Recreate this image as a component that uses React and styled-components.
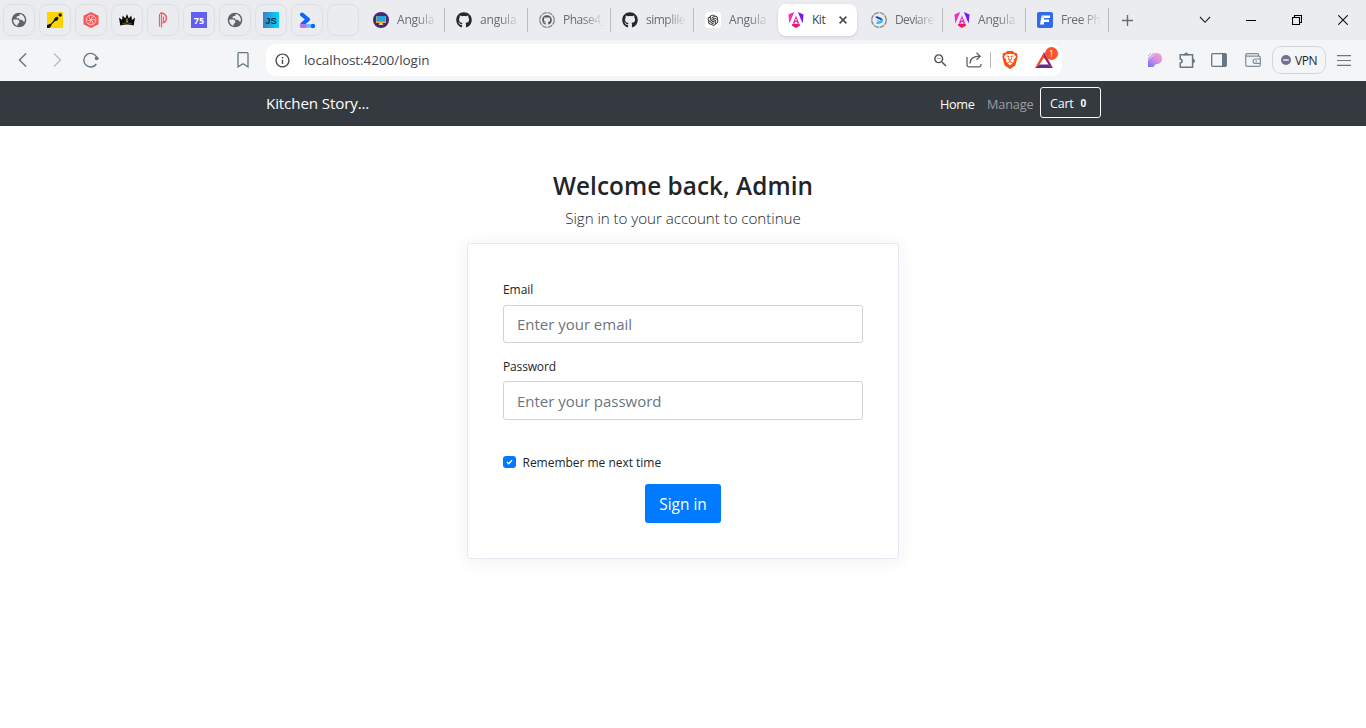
import React from "react";
import styled, { createGlobalStyle, css } from "styled-components";
import { MdInfoOutline, MdZoomOut } from "react-icons/md";
import { FaGithub } from "react-icons/fa";
import { AiOutlineOpenAI } from "react-icons/ai";
import { SiBrave } from "react-icons/si";

const Global = createGlobalStyle`
  *, *::before, *::after { box-sizing: border-box; }
  body { margin: 0; background: #fff; font-family: "Open Sans", "Noto Sans", sans-serif; }
  svg { display: block; flex: none; }
`;

const Screen = styled.div`
  width: 1366px;
  height: 728px;
  overflow: hidden;
  display: flex;
  flex-direction: column;
`;

const TabStrip = styled.div`
  height: 40px;
  flex: none;
  display: flex;
  align-items: center;
  background: #ebecf0;
  padding-left: 3px;
`;

const PinnedTabs = styled.div`
  display: flex;
  gap: 4px;
  margin-right: 3px;
`;

const PinnedTab = styled.div`
  width: 32px;
  height: 32px;
  border: 1px solid #dedfe3;
  border-radius: 8px;
  display: flex;
  align-items: center;
  justify-content: center;
`;

const TabSlot = styled.div`
  width: 83px;
  height: 24px;
  flex: none;
  display: flex;
  align-items: center;
  padding-left: 11px;
  gap: 8px;
  border-right: 1px solid ${(p) => (p.$divider ? "#bdbec1" : "transparent")};
`;

const ActiveTab = styled.div`
  width: 79px;
  height: 32px;
  flex: none;
  margin: 0 3px 0 1px;
  padding: 0 8px 0 10px;
  display: flex;
  align-items: center;
  gap: 8px;
  background: #fff;
  border-radius: 8px;
  box-shadow: 0 1px 3px rgba(0, 0, 0, 0.12);
`;

const TabTitle = styled.span`
  width: 41px;
  overflow: hidden;
  white-space: nowrap;
  font-size: 12px;
  line-height: 18px;
  letter-spacing: ${(p) => p.$spacing || 0}px;
  color: ${(p) => (p.$active ? "#3b3e4f" : "#6b6c72")};
  ${(p) =>
    p.$active
      ? css`width: 18px; overflow: visible; letter-spacing: -0.5px;`
      : css`mask-image: linear-gradient(90deg, #000 20px, rgba(0, 0, 0, 0.12) 38px);`}
`;

const ActiveClose = styled.div`
  margin-left: auto;
  padding-right: 2px;
`;

const WindowControls = styled.div`
  margin-left: auto;
  display: flex;
`;

const WindowControl = styled.div`
  width: 46px;
  height: 40px;
  display: flex;
  align-items: center;
  justify-content: center;
`;

const NewTab = styled.div`
  width: 36px;
  display: flex;
  justify-content: center;
`;

const Toolbar = styled.div`
  height: 41px;
  flex: none;
  display: flex;
  align-items: center;
  background: #f3f5f7;
  padding-bottom: 1px;
`;

const NavButtons = styled.div`
  width: 266px;
  display: flex;
  align-items: center;
  padding-left: 13px;
  gap: 14px;
`;

const BookmarkSlot = styled.div`
  margin-left: auto;
  padding-right: 12px;
`;

const AddressBar = styled.div`
  width: 796px;
  height: 32px;
  display: flex;
  align-items: center;
  padding: 0 9px 0 8px;
  border-radius: 10px;
  background: #fff;
`;

const Url = styled.span`
  flex: 1;
  margin-left: 13px;
  font-size: 13.5px;
  line-height: 20px;
  letter-spacing: -0.05px;
  color: #43454f;
`;

const ShareSlot = styled.div`
  margin: 0 1px 0 17px;
`;

const UrlDivider = styled.div`
  width: 1px;
  height: 16px;
  margin: 0 10px 0 7px;
  background: #b4b6ba;
`;

const Rewards = styled.div`
  position: relative;
  margin-left: 16px;
`;

const RewardsBadge = styled.div`
  position: absolute;
  left: 10px;
  top: -5px;
  width: 13px;
  height: 13px;
  border-radius: 50%;
  background: #fb542b;
  color: #fff;
  font-size: 8.5px;
  line-height: 13px;
  text-align: center;
`;

const ToolbarActions = styled.div`
  flex: 1;
  display: flex;
  align-items: center;
  justify-content: flex-end;
  padding-right: 13px;
`;

const ActionSlot = styled.div`
  width: ${(p) => p.$w}px;
  display: flex;
  justify-content: center;
`;

const VpnButton = styled.div`
  width: 54px;
  height: 28px;
  margin: 0 9px 0 0;
  display: flex;
  align-items: center;
  justify-content: center;
  gap: 4px;
  border: 1px solid #d0d7de;
  border-radius: 9px;
  font-size: 12px;
  letter-spacing: -0.5px;
  color: #1f2430;
`;

const Navbar = styled.nav`
  height: 45px;
  flex: none;
  padding: 0 265px 0 266px;
  display: flex;
  align-items: center;
  background: #343a40;
`;

const Brand = styled.a`
  padding-bottom: 2px;
  font-size: 15.2px;
  line-height: 22px;
  letter-spacing: -0.15px;
  color: #fff;
`;

const NavLinks = styled.div`
  margin-left: auto;
  display: flex;
  align-items: center;
`;

const NavLink = styled.a`
  width: ${(p) => p.$w}px;
  font-size: 12.7px;
  line-height: 20px;
  white-space: nowrap;
  letter-spacing: ${(p) => p.$spacing}px;
  color: ${(p) => (p.$active ? "#fff" : "#9a9da0")};
`;

const CartButton = styled.button`
  width: 61px;
  height: 31px;
  margin: 0 0 3px;
  padding: 2px 0 0 9px;
  display: flex;
  align-items: center;
  gap: 7px;
  background: none;
  border: 1px solid #f8f9fa;
  border-radius: 3px;
  font-family: inherit;
  font-size: 12.5px;
  letter-spacing: -0.2px;
  color: #f8f9fa;
`;

const CartCount = styled.span`
  font-size: 10px;
  font-weight: 700;
`;

const Content = styled.main`
  flex: 1;
  display: flex;
  flex-direction: column;
  align-items: center;
  padding-top: 43px;
`;

const Heading = styled.h1`
  margin: 0;
  font-size: 24.3px;
  font-weight: 600;
  line-height: 34px;
  letter-spacing: 0.06px;
  color: #212529;
`;

const Lead = styled.p`
  margin: 4px 0 14px;
  font-size: 15.2px;
  font-weight: 300;
  line-height: 22px;
  letter-spacing: -0.06px;
  color: #212529;
`;

const Card = styled.form`
  width: 432px;
  height: 316px;
  padding: 36px 35px 0;
  display: flex;
  flex-direction: column;
  background: #fff;
  border: 1px solid #e5e9f2;
  border-radius: 3px;
  box-shadow: 0 2px 18px rgba(30, 40, 90, 0.07);
`;

const Label = styled.label`
  height: ${(p) => p.$h}px;
  font-size: 12px;
  line-height: 19px;
  letter-spacing: ${(p) => p.$spacing}px;
  color: #212529;
`;

const Field = styled.input`
  width: 360px;
  height: ${(p) => p.$h}px;
  margin: 0 0 ${(p) => p.$gap}px;
  padding: 0 13px;
  border: 1px solid #ced4da;
  border-radius: 3px;
  font-family: inherit;
  font-size: 15px;
  letter-spacing: -0.02px;
  outline: none;
  &::placeholder { color: #6c757d; opacity: 1; }
`;

const RememberRow = styled.div`
  height: 20px;
  display: flex;
  align-items: center;
  gap: 6.5px;
  font-size: 12px;
  letter-spacing: -0.02px;
  color: #212529;
`;

const CheckMark = styled.span`
  width: 13px;
  height: 12px;
  display: flex;
  align-items: center;
  justify-content: center;
  border-radius: 3px;
  background: #007bff;
`;

const SubmitButton = styled.button`
  width: 76px;
  height: 39px;
  margin: 12px auto 0;
  padding: 2px 0 0;
  border: 0;
  border-radius: 3px;
  background: #007bff;
  color: #fff;
  font-family: inherit;
  font-size: 15.4px;
  letter-spacing: 0;
`;

const FaviconTile = styled.div`
  width: 16px;
  height: 16px;
  display: flex;
  align-items: center;
  justify-content: center;
  flex: none;
  border-radius: ${(p) => p.$r || 0}px;
  background: ${(p) => p.$bg};
  color: ${(p) => p.$fg};
  font: 700 ${(p) => p.$size || 9}px "Open Sans", sans-serif;
`;

const Globe = () => (
  <svg width="16" height="16" viewBox="0 0 16 16">
    <circle cx="8" cy="8" r="7.300" fill="#5f6368" />
    <path d="M2.200 7.600h4q2 .2 2 2v1.300q-1.700 0-1.700 1.500v1.700Q2.200 12.500 2.200 7.600z" fill="#ebecf0" />
    <path d="M5.500 5.600q0-1.500 1.700-1.500h1.200V2.200h1.800q3 1.500 3.600 4.600v2.600h-1.500q-.6-1.700-2.300-1.700H8.200V6.200H5.500z" fill="#ebecf0" />
  </svg>
);

const Plunger = () => (
  <svg width="16" height="16" viewBox="0 0 16 16">
    <rect width="16" height="16" fill="#ffd500" />
    <circle cx="13.2" cy="3" r="1.7" fill="#171717" />
    <path d="M0 13l4-1.500 3-3.500C7 6 9.800 4 11 5.200s-.6 4-2.800 3.900L4.800 12.300 4 14.500 2.400 16H0z" fill="#171717" />
  </svg>
);

const HexKnot = () => (
  <svg width="16" height="16" viewBox="0 0 16 16" fill="none">
    <path d="M8 0l7.5 3.800v8.400L8 16 .5 12.200V3.800z" fill="#f95555" />
    <circle cx="8" cy="8" r="4.900" stroke="#fbd5d5" strokeWidth=".9" />
    {[0, 60, 120, 180, 240, 300].map((a) => (
      <path key={a} d="M8 8Q8 5 11 4.200" stroke="#fbd5d5" strokeWidth=".8" transform={`rotate(${a} 8 8)`} />
    ))}
  </svg>
);

const Crown = () => (
  <svg width="16" height="12" viewBox="0 0 16 12">
    <path d="M0 3.500L3 6 3.700 1.500 6.200 4.500 8 0l1.800 4.500 2.500-3L13 6l3-2.500-1.300 8Q8 9.500 1.300 11.500z" fill="#0a0a0a" />
    <path d="M8 4l1.300 2.400L8 8.800 6.700 6.400z" fill="#e9b51c" />
    <circle cx="8" cy="6.200" r=".7" fill="#0a0a0a" />
    <path d="M3.500 9.600Q8 8 12.500 9.600" fill="none" stroke="#c89a18" strokeWidth=".5" />
  </svg>
);

const StripedP = () => (
  <svg width="10" height="16" viewBox="0 0 10 16" fill="none" stroke="#ef5f6d">
    <path d="M1.500 2v12.500M3.500 1v14.500M5.500 4.500v6.500" strokeWidth="1.200" />
    <path d="M2 1.300c7.500-1.500 8.500 8.700 2.500 9.700" strokeWidth="1.600" />
  </svg>
);

const JsLetters = styled.span`
  font: 700 9.5px "Liberation Sans", sans-serif;
  color: #123047;
`;

const JsTile = styled(FaviconTile)`
  background: linear-gradient(90deg, #3d7fce, #00d5fb);
`;

const JsLogo = () => <JsTile><JsLetters>JS</JsLetters></JsTile>;

const Prompt = () => (
  <svg width="17" height="17" viewBox="0 0 17 17" fill="none" strokeLinecap="round">
    <path d="M3 2.500L9 7.500 3.500 12" stroke="#0a66ff" strokeWidth="4" strokeLinejoin="round" />
    <path d="M2.500 14h4" stroke="#c86bf5" strokeWidth="3.800" />
    <path d="M7.500 14H13" stroke="#5cc4ff" strokeWidth="3.800" strokeLinecap="butt" />
    <circle cx="14" cy="14" r="2.200" fill="#0a66ff" />
  </svg>
);

const Monitor = () => (
  <svg width="16" height="16" viewBox="0 0 16 16">
    <circle cx="8" cy="8" r="8" fill="#472a72" />
    <rect x="3" y="4" width="10" height="7" rx=".6" fill="#f0b13c" />
    <rect x="3.500" y="4" width="9" height="5.600" fill="#22a5dd" />
    <path d="M6.500 11h3l.8 2H5.700z" fill="#e9c98a" />
  </svg>
);

const PendingRing = ({ children }) => (
  <svg width="16" height="16" viewBox="0 0 16 16" fill="none">
    <circle cx="8" cy="8" r="7.300" stroke="#85888c" strokeWidth="1.300" strokeDasharray="5 .8" />
    {children}
  </svg>
);

const PendingGithub = () => (
  <PendingRing>
    <FaGithub x="3" y="3" size={10} color="#55585c" />
  </PendingRing>
);

const PendingSwirl = () => (
  <PendingRing>
    <path d="M5.200 4.500c1.500 2.200 4.800 1.500 5.600 3.700" stroke="#2447b5" strokeWidth="2.200" />
    <path d="M11 7.500c0 3-3 3.500-5.500 3.500" stroke="#33b8ec" strokeWidth="2.200" />
    <path d="M6 8.500l2.500.8" stroke="#33b8ec" strokeWidth="1" />
  </PendingRing>
);

const Angular = () => (
  <svg width="16" height="16" viewBox="0 0 24 24">
    <path d="M9.300 0L.7 3.900 2 17.200z" fill="#f42bc0" />
    <path d="M14.700 0l8.600 3.900L22 17.200z" fill="#7c16f8" />
    <path d="M12 5.400L7.200 17.200h2.700l.9-2.300h2.500l1 2.300h2.600zm0 4.100l1.400 3.400h-2.800z" fill="#ec26cd" />
    <path d="M5.800 19l1-1.300h10.400l1 2.400L12 24l-6.200-3.800z" fill="#f31565" />
  </svg>
);

const Freepik = () => (
  <svg width="16" height="16" viewBox="0 0 16 16">
    <rect width="16" height="16" rx="2" fill="#336aea" />
    <path d="M4.500 3.500H13V6H7v1.500h5V10H7v2.500H3L4.500 3.500z" fill="#fff" />
    <path d="M4 5h3" stroke="#8ab0ff" strokeWidth=".7" />
  </svg>
);

const Line = ({ w, h, d, color, sw = 1 }) => (
  <svg width={w} height={h} viewBox={`0 0 ${w} ${h}`} fill="none" stroke={color} strokeWidth={sw}>
    <path d={d} />
  </svg>
);

const slate = "#667884";

const SeventyFive = () => <FaviconTile $bg="#6360ef" $fg="#fff" $size={9}>75</FaviconTile>;
const Blank = () => null;
const pinned = [Globe, Plunger, HexKnot, Crown, StripedP, SeventyFive, Globe, JsLogo, Prompt, Blank];

const Gh = () => <FaGithub size={16} color="#24292e" />;
const OpenAi = () => <FaviconTile $bg="#fff" $r={3}><AiOutlineOpenAI size={14} color="#222" /></FaviconTile>;

const tabsBefore = [
  { icon: Monitor, title: "Angula", divider: true },
  { icon: Gh, title: "angula", divider: true },
  { icon: PendingGithub, title: "Phase4_", divider: true, spacing: -0.5 },
  { icon: Gh, title: "simplile", divider: true, spacing: -0.5 },
  { icon: OpenAi, title: "Angula", divider: false },
];

const tabsAfter = [
  { icon: PendingSwirl, title: "Deviare", divider: true, spacing: -0.6 },
  { icon: Angular, title: "Angula", divider: true },
  { icon: Freepik, title: "Free Ph", divider: true, spacing: -0.4 },
];

const Tab = ({ icon: Icon, title, divider, spacing = -0.2 }) => (
  <TabSlot $divider={divider}>
    <Icon />
    <TabTitle $spacing={spacing}>{title}</TabTitle>
  </TabSlot>
);

const BrowserTabs = () => (
  <TabStrip>
    <PinnedTabs>
      {pinned.map((Icon, i) => <PinnedTab key={i}><Icon /></PinnedTab>)}
    </PinnedTabs>
    {tabsBefore.map((t, i) => <Tab key={i} {...t} />)}
    <ActiveTab>
      <Angular />
      <TabTitle $active>Kit</TabTitle>
      <ActiveClose><Line w={8} h={8} d="M.6.6l6.800 6.800M7.400.6L.6 7.400" color="#4a4c52" sw={1.600} /></ActiveClose>
    </ActiveTab>
    {tabsAfter.map((t, i) => <Tab key={i} {...t} />)}
    <NewTab><Line w={11} h={11} d="M5.500 0v11M0 5.500h11" color="#6b6c70" sw={1.400} /></NewTab>
    <WindowControls>
      <WindowControl><Line w={12} h={8} d="M1 1l5 5.300L11 1" color="#222" sw={1.100} /></WindowControl>
      <WindowControl><Line w={10} h={1} d="M0 .5h10" color="#000" /></WindowControl>
      <WindowControl><Line w={10} h={10} d="M.5 2.500h7v7h-7zM2.500 2.500v-2h7v7h-2" color="#000" sw={1.100} /></WindowControl>
      <WindowControl><Line w={10} h={10} d="M.3.3l9.400 9.400M9.700.3L.3 9.700" color="#111" sw={1.100} /></WindowControl>
    </WindowControls>
  </TabStrip>
);

const BrowserToolbar = () => (
  <Toolbar>
    <NavButtons>
      <Line w={20} h={16} d="M13 1.500L6.500 8l6.500 6.500" color={slate} sw={1.500} />
      <Line w={20} h={16} d="M7 1.500L13.500 8 7 14.500" color="#b5bdc2" sw={1.300} />
      <svg width="20" height="16" viewBox="0 0 20 16" fill="none">
        <path d="M15.800 5.300A6.800 6.800 0 1 0 15.300 12" stroke={slate} strokeWidth="1.400" />
        <circle cx="15.700" cy="6.300" r="1.900" fill={slate} />
      </svg>
      <BookmarkSlot>
        <svg width="20" height="16" viewBox="0 0 20 16" fill="none" stroke={slate} strokeWidth="1.300">
          <path d="M5 .7h8q1 0 1 1v13.200L9 11.800l-5 3.100V1.700q0-1 1-1z" />
        </svg>
      </BookmarkSlot>
    </NavButtons>
    <AddressBar>
      <MdInfoOutline size={17} color="#4b4c52" />
      <Url>localhost:4200/login</Url>
      <MdZoomOut size={17} color="#4d4f54" />
      <ShareSlot>
        <svg width="16" height="16" viewBox="0 0 16 16" fill="none" stroke="#5d6064" strokeWidth="1.300">
          <path d="M1 5v8q0 1.800 1.800 1.800h10.400q1.800 0 1.800-1.800v-1M4 11.500C4 7 7 4.200 14 4.200M10.500.8L14.200 4.200 10.500 7.700" />
        </svg>
      </ShareSlot>
      <UrlDivider />
      <SiBrave size={18} color="#fb4f0b" />
      <Rewards>
        <svg width="18" height="16" viewBox="0 0 18 16">
          <path d="M9 0v5.500L4.500 12.500 0 16z" fill="#ff4724" />
          <path d="M9 0l9 16-4.500-3.500L9 5.500z" fill="#9e1f63" />
          <path d="M0 16l4.500-3.500h9L18 16z" fill="#662d91" />
        </svg>
        <RewardsBadge>1</RewardsBadge>
      </Rewards>
    </AddressBar>
    <ToolbarActions>
      <ActionSlot $w={30}>
        <svg width="14" height="14" viewBox="0 0 14 14">
          <defs>
            <linearGradient id="pg" x1="0" y1="1" x2=".8" y2="0"><stop stopColor="#6576ff" /><stop offset=".5" stopColor="#c98be8" /><stop offset="1" stopColor="#ff9bd3" /></linearGradient>
          </defs>
          <path d="M0 14V5L5 0h4a5 5.500 0 0 1 0 11q-2 0-2.500 1.500T4.500 14z" fill="url(#pg)" />
          <path d="M0 3L3 0M0 6l6-6" stroke="#c8a2ec" strokeWidth="1" />
          <path d="M0 4.600L4.600 0M0 7.500L7.500 0" stroke="#f3f5f7" strokeWidth=".7" />
        </svg>
      </ActionSlot>
      <ActionSlot $w={34}>
        <svg width="17" height="17" viewBox="0 0 17 17" fill="none" stroke={slate} strokeWidth="1.500">
          <path d="M1.200 2.800h12.400v12.500H1.200V11c2.600 0 2.600-3.800 0-3.800z" strokeLinejoin="round" />
          <path d="M5.600 2.500q1.600-2.600 3.200 0zM14 7.400q2.600 1.500 0 3z" fill={slate} />
        </svg>
      </ActionSlot>
      <ActionSlot $w={30}>
        <svg width="16" height="14" viewBox="0 0 16 14" fill="none" stroke={slate} strokeWidth="1.300">
          <rect x=".7" y=".7" width="14.600" height="12.600" rx="1" />
          <path d="M11 1h4v12h-4z" fill={slate} stroke="none" />
        </svg>
      </ActionSlot>
      <ActionSlot $w={38}>
        <svg width="16" height="14" viewBox="0 0 16 14" fill="none" stroke="#7e8d96" strokeWidth="1.200">
          <path d="M13.500 3V1.600q0-1-1-1h-10Q.7.600.7 2.200v9.600q0 1.600 1.600 1.600h11.500q1.500 0 1.500-1.500V4.700q0-1.500-1.500-1.500H2.300Q.9 3.200.7 2" />
          <path d="M15.500 6H10.300a2.200 2.200 0 0 0 0 4.400h5.200M10.500 8.200h1.500" />
        </svg>
      </ActionSlot>
      <VpnButton>
        <svg width="10" height="10" viewBox="0 0 10 10"><circle cx="5" cy="5" r="5" fill="#6e7191" /><path d="M2.200 5h5.600" stroke="#fff" strokeWidth="1.300" /></svg>
        VPN
      </VpnButton>
      <ActionSlot $w={18}>
        <Line w={14} h={11} d="M0 .7h14M0 5.500h14M0 10.300h14" color={slate} sw={1.200} />
      </ActionSlot>
    </ToolbarActions>
  </Toolbar>
);

const SiteNav = () => (
  <Navbar>
    <Brand>Kitchen Story...</Brand>
    <NavLinks>
      <NavLink $active $w={47} $spacing={-0.35}>Home</NavLink>
      <NavLink $w={53} $spacing={-0.15}>Manage</NavLink>
      <CartButton>Cart<CartCount>0</CartCount></CartButton>
    </NavLinks>
  </Navbar>
);

const LoginForm = () => (
  <Content>
    <Heading>Welcome back, Admin</Heading>
    <Lead>Sign in to your account to continue</Lead>
    <Card>
      <Label $h={25} $spacing={-0.05}>Email</Label>
      <Field $h={38} $gap={14} placeholder="Enter your email" />
      <Label $h={24} $spacing={-0.15}>Password</Label>
      <Field $h={39} $gap={32} type="password" placeholder="Enter your password" />
      <RememberRow>
        <CheckMark><Line w={7} h={6} d="M1 3l1.700 1.700L6 1.200" color="#fff" sw={1.500} /></CheckMark>
        Remember me next time
      </RememberRow>
      <SubmitButton type="button">Sign in</SubmitButton>
    </Card>
  </Content>
);

export default function App() {
  return (
    <Screen>
      <Global />
      <BrowserTabs />
      <BrowserToolbar />
      <SiteNav />
      <LoginForm />
    </Screen>
  );
}
